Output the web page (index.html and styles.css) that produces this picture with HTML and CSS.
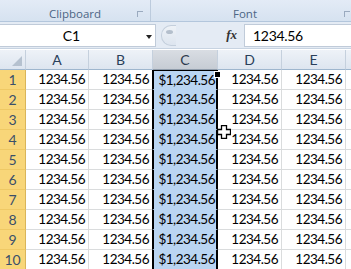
FILE: index.html
```html
<!DOCTYPE html>
<html lang="en">
<head>
    <meta charset="UTF-8">
    <title>Sheet</title>
    <link rel="stylesheet" href="styles.css">
</head>
<body>
    <div class="ribbon">
        <div class="group group-clipboard">
            <span class="group-label">Clipboard</span>
            <span class="launcher"></span>
        </div>
        <div class="group group-font">
            <span class="group-label">Font</span>
            <span class="launcher"></span>
        </div>
    </div>

    <div class="formula-bar">
        <div class="name-box">
            <span class="name-text">C1</span>
            <span class="drop-arrow"></span>
        </div>
        <div class="splitter"><span class="knob"></span></div>
        <div class="fx-btn">fx</div>
        <div class="formula-input">1234.56</div>
    </div>

    <div class="sheet">
        <div class="grid" id="grid">
            <div class="corner"><span class="corner-tri"></span></div>
            <div class="col-head">A</div>
            <div class="col-head">B</div>
            <div class="col-head active">C</div>
            <div class="col-head">D</div>
            <div class="col-head">E</div>
            <div class="col-head last"></div>
        </div>
        <div class="fill-handle"></div>
        <svg class="cursor" width="14" height="14" viewBox="0 0 14 14">
            <polygon points="4.5,0.5 9.5,0.5 9.5,4.5 13.5,4.5 13.5,9.5 9.5,9.5 9.5,13.5 4.5,13.5 4.5,9.5 0.5,9.5 0.5,4.5 4.5,4.5" fill="#fff" stroke="#000" stroke-width="1.3"/>
        </svg>
    </div>

    <script>
        // build the ten rows of the sheet
        var grid = document.getElementById('grid');
        for (var r = 1; r <= 10; r++) {
            var html = '<div class="row-head">' + r + '</div>';
            html += '<div class="cell">1234.56</div>';
            html += '<div class="cell">1234.56</div>';
            html += '<div class="cell sel' + (r === 1 ? ' first' : '') + '">$1,234.56</div>';
            html += '<div class="cell">1234.56</div>';
            html += '<div class="cell">1234.56</div>';
            html += '<div class="cell last"></div>';
            grid.insertAdjacentHTML('beforeend', html);
        }
    </script>
</body>
</html>
```

FILE: styles.css
```css
body {
    margin: 0;
    width: 351px;
    height: 269px;
    overflow: hidden;
    background-color: #ffffff;
    font-family: Lato, 'Liberation Sans', sans-serif;
}

/* ribbon strip */
.ribbon {
    display: flex;
    height: 21px;
    background: linear-gradient(#e3ebf6, #d6e2f0);
    border-bottom: 1px solid #b3c6dc;
}

.group {
    position: relative;
    display: flex;
    align-items: center;
    justify-content: center;
    border-right: 1px solid #bccbdd;
}

.group-clipboard {
    width: 150px;
}

.group-font {
    flex: 1;
    border-right: none;
    padding-right: 8px;
}

.group-label {
    font-family: 'Open Sans', sans-serif;
    font-size: 11.5px;
    color: #4c6584;
    margin-top: 6px;
}

.group-font .group-label {
    margin-left: -4px;
}

.launcher {
    position: absolute;
    right: 7px;
    bottom: 4px;
    width: 5px;
    height: 5px;
    border-top: 1px solid #9aaabf;
    border-left: 1px solid #9aaabf;
}

.group-font .launcher {
    right: 1px;
}

/* formula bar */
.formula-bar {
    display: flex;
    height: 23px;
    padding: 2px 0 1px 0;
    background-color: #e4ebf4;
    border-bottom: 1px solid #c7d3e1;
}

.name-box {
    position: relative;
    width: 155px;
    background-color: #ffffff;
    border: 1px solid #c0cbd9;
    border-left: none;
    display: flex;
    align-items: center;
    justify-content: center;
}

.name-text {
    font-size: 14px;
    color: #000;
    margin-left: -12px;
}

.drop-arrow {
    position: absolute;
    right: 3px;
    top: 10px;
    border-left: 3px solid transparent;
    border-right: 3px solid transparent;
    border-top: 4px solid #222;
}

.splitter {
    width: 14px;
    margin: 1px 0 1px 5px;
    border: 1px solid #c4cfdc;
    border-right: none;
    border-radius: 10px 0 0 10px;
    background: linear-gradient(#eef2f7, #dde5ef);
}

.knob {
    display: block;
    width: 7px;
    height: 4px;
    margin: 4px 0 0 4px;
    border-radius: 50%;
    background-color: #b4bfcc;
}

.fx-btn {
    width: 61px;
    text-align: right;
    padding-right: 7px;
    font-family: 'Liberation Serif', serif;
    font-style: italic;
    font-weight: bold;
    font-size: 13px;
    line-height: 21px;
    color: #333;
}

.formula-input {
    flex: 1;
    background-color: #ffffff;
    border: 1px solid #c0cbd9;
    border-right: none;
    padding-left: 8px;
    font-size: 14px;
    letter-spacing: -0.3px;
    line-height: 21px;
    color: #000;
}

/* sheet */
.sheet {
    position: relative;
    margin-top: 1px;
}

.grid {
    display: grid;
    grid-template-columns: 26px 63px 64px 65px 64px 64px 5px;
    grid-auto-rows: 20px;
}

.corner,
.col-head {
    background: linear-gradient(#eef2f8, #dde5ef);
    border-right: 1px solid #c5d0dd;
    border-bottom: 1px solid #9eb6ce;
    font-size: 14px;
    color: #2a3f5a;
    text-align: center;
    line-height: 19px;
    box-sizing: border-box;
}

.corner {
    position: relative;
}

.corner-tri {
    position: absolute;
    right: 3px;
    bottom: 3px;
    border-left: 10px solid transparent;
    border-bottom: 10px solid #b5c1cf;
}

.col-head.active {
    background: linear-gradient(#d9dde3, #c6ccd4);
    color: #2b3a4d;
    border-bottom-color: #8f9cab;
}

.col-head.last {
    border-right: none;
}

.row-head {
    background-color: #f8d679;
    border-right: 1px solid #d9b55a;
    border-bottom: 1px solid #efc965;
    font-size: 14px;
    color: #3a4f6a;
    text-align: center;
    line-height: 19px;
    box-sizing: border-box;
}

.cell {
    border-right: 1px solid #dadcdd;
    border-bottom: 1px solid #dadcdd;
    font-size: 13.5px;
    letter-spacing: -0.5px;
    color: #000;
    text-align: right;
    padding-right: 3px;
    line-height: 19px;
    box-sizing: border-box;
}

.cell.sel {
    background-color: #bad5f2;
    border-left: 2px solid #000;
    border-right: 2px solid #000;
    border-bottom-color: #bad5f2;
    padding-right: 1px;
    margin-left: -1px;
}

.cell.sel.first {
    border-top: 1px solid #000;
    line-height: 18px;
}

.cell.last {
    border-right: none;
}

.fill-handle {
    position: absolute;
    left: 214px;
    top: 21px;
    width: 5px;
    height: 5px;
    background-color: #000;
    border: 1px solid #fff;
}

.cursor {
    position: absolute;
    left: 217px;
    top: 75px;
}
```
